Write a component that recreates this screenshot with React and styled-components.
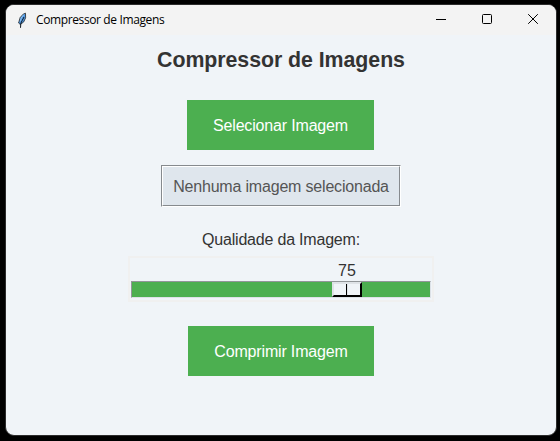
import React from 'react';
import styled, { createGlobalStyle } from 'styled-components';

const Global = createGlobalStyle`
  * { box-sizing: border-box; }
  body { margin: 0; background: #000; }
`;

const Desktop = styled.div`
  width: 560px;
  height: 441px;
  padding: 4px 3px 5px 5px;
  background: #000;
  font-family: "Liberation Sans", Arial, sans-serif;
  overflow: hidden;
`;

const Window = styled.main`
  width: 552px;
  height: 432px;
  border: 1px solid #2c2c2c;
  border-radius: 9px;
  background: #f0f4f8;
  overflow: hidden;
`;

const TitleBar = styled.header`
  display: flex;
  align-items: center;
  height: 30px;
  padding-left: 9px;
  background: #f3f3f3;
`;

const TitleText = styled.span`
  flex: 1;
  margin-left: 5px;
  font: 12px/16px "Open Sans", "Noto Sans", sans-serif;
  letter-spacing: -0.38px;
  color: #000;
  white-space: nowrap;
`;

const WindowControl = styled.button`
  display: flex;
  align-items: center;
  justify-content: center;
  width: 46px;
  height: 30px;
  padding: 0 0 2px;
  border: 0;
  background: transparent;
`;

const Content = styled.section`
  display: flex;
  flex-direction: column;
  align-items: center;
  height: 400px;
`;

const Heading = styled.h1`
  margin: 12px 0 0;
  font-size: 21.33px;
  line-height: 26px;
  font-weight: 700;
  letter-spacing: -0.05px;
  color: #333;
  white-space: nowrap;
`;

const ActionButton = styled.button`
  width: ${(p) => p.$width}px;
  height: 50px;
  margin: ${(p) => p.$margin};
  padding: 2px 0 0;
  border: 0;
  background: #4caf50;
  color: #fff;
  font: 16px/20px "Liberation Sans", Arial, sans-serif;
  letter-spacing: -0.17px;
  white-space: nowrap;
`;

const FileStatus = styled.div`
  width: 240px;
  height: 42px;
  border: 1px solid;
  border-color: #868a8e #fff #fff #868a8e;
`;

const FileStatusInner = styled.div`
  display: flex;
  align-items: center;
  justify-content: center;
  height: 100%;
  padding-top: 2px;
  border: 1px solid;
  border-color: #fff #868a8e #868a8e #fff;
  background: #dfe6ed;
  color: #555;
  font-size: 16px;
  letter-spacing: -0.19px;
  white-space: nowrap;
`;

const QualityLabel = styled.label`
  margin-top: 23px;
  font-size: 16px;
  line-height: 20px;
  letter-spacing: -0.2px;
  color: #333;
  white-space: nowrap;
`;

const Scale = styled.div`
  width: 306px;
  height: 46px;
  margin-top: 6px;
  padding: 0 1px;
  border: 2px solid #f0f0f0;
`;

const ScaleValue = styled.output`
  display: block;
  width: 30px;
  height: 23px;
  margin-left: 201px;
  padding-top: 3px;
  line-height: 20px;
  font-size: 16px;
  text-align: center;
  color: #333;
`;

const Trough = styled.div`
  width: 300px;
  height: 17px;
  border: 1px solid;
  border-color: #929699 #dce1e7 #dce1e7 #929699;
  background: #4caf50;
`;

const Thumb = styled.div`
  display: flex;
  width: 30px;
  height: 15px;
  margin-left: 200px;
  border: 2px solid;
  border-color: #dfe3e7 #000 #000 #dfe3e7;
  background: #f0f4f8;
`;

const ThumbLine = styled.span`
  width: 2px;
  height: 11px;
  margin-left: 12px;
  border-left: 1px solid #000;
  border-right: 1px solid #dfe3e7;
`;

const FeatherIcon = () => (
  <svg width="16" height="18" viewBox="0 0 16 18">
    <path d="M10.5 2.2 8.3 3.1 5.2 6.5 4 10.5 3.6 12 5.3 13.5 8.7 10.9 10.6 6.8Z" fill="#4d97e6" stroke="#303438" strokeWidth=".9" />
    <path d="M9 6 7 9.8 5.8 12.4 5.5 16.8" fill="none" stroke="#101820" strokeWidth="1" />
    <path d="M8.8 3.6 6.2 7 5.4 10.3" fill="none" stroke="#8fc2ee" strokeWidth="1" />
  </svg>
);

const MinimizeIcon = () => (
  <svg width="10" height="10" viewBox="0 0 10 10" shapeRendering="crispEdges">
    <path d="M0 5.5H10" stroke="#000" />
  </svg>
);

const MaximizeIcon = () => (
  <svg width="10" height="10" viewBox="0 0 10 10">
    <rect x=".5" y=".5" width="9" height="9" rx="1" fill="none" stroke="#000" />
  </svg>
);

const CloseIcon = () => (
  <svg width="10" height="10" viewBox="0 0 10 10">
    <path d="M.2.2 9.8 9.8M9.8.2.2 9.8" stroke="#000" />
  </svg>
);

export default function App() {
  return (
    <Desktop>
      <Global />
      <Window>
        <TitleBar>
          <FeatherIcon />
          <TitleText>Compressor de Imagens</TitleText>
          <WindowControl aria-label="Minimizar"><MinimizeIcon /></WindowControl>
          <WindowControl aria-label="Maximizar"><MaximizeIcon /></WindowControl>
          <WindowControl aria-label="Fechar"><CloseIcon /></WindowControl>
        </TitleBar>
        <Content>
          <Heading>Compressor de Imagens</Heading>
          <ActionButton $width={187} $margin="27px 1px 15px 0">Selecionar Imagem</ActionButton>
          <FileStatus>
            <FileStatusInner>Nenhuma imagem selecionada</FileStatusInner>
          </FileStatus>
          <QualityLabel>Qualidade da Imagem:</QualityLabel>
          <Scale>
            <ScaleValue>75</ScaleValue>
            <Trough>
              <Thumb><ThumbLine /></Thumb>
            </Trough>
          </Scale>
          <ActionButton $width={186} $margin="24px 0 0">Comprimir Imagem</ActionButton>
        </Content>
      </Window>
    </Desktop>
  );
}
